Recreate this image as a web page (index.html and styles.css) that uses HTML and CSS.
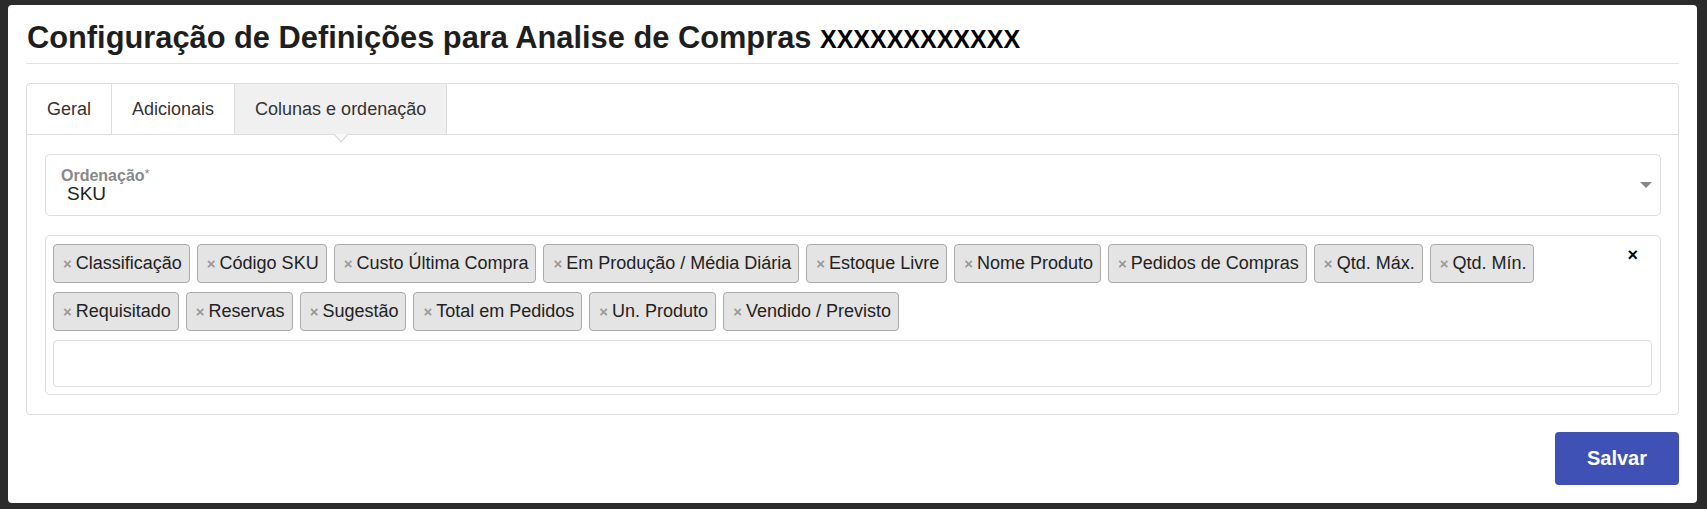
FILE: index.html
```html
<!DOCTYPE html>
<html lang="pt">
<head>
<meta charset="utf-8">
<title>Configuração de Definições</title>
<link rel="stylesheet" href="styles.css">
</head>
<body>
<div class="modal">
  <h3 class="title">Configuração de Definições para Analise de Compras <span class="title-code">XXXXXXXXXXXX</span></h3>
  <div class="panel">
    <div class="tabs">
      <div class="tab">Geral</div>
      <div class="tab">Adicionais</div>
      <div class="tab active">Colunas e ordenação</div>
    </div>
    <div class="panel-body">
      <div class="select">
        <div class="select-text">
          <div class="select-label">Ordenação<span class="req">*</span></div>
          <div class="select-value">SKU</div>
        </div>
        <span class="caret"></span>
      </div>
      <div class="multi">
        <ul class="chips">
          <li class="chip"><span class="chip-x">×</span>Classificação</li>
          <li class="chip"><span class="chip-x">×</span>Código SKU</li>
          <li class="chip"><span class="chip-x">×</span>Custo Última Compra</li>
          <li class="chip"><span class="chip-x">×</span>Em Produção / Média Diária</li>
          <li class="chip"><span class="chip-x">×</span>Estoque Livre</li>
          <li class="chip"><span class="chip-x">×</span>Nome Produto</li>
          <li class="chip"><span class="chip-x">×</span>Pedidos de Compras</li>
          <li class="chip"><span class="chip-x">×</span>Qtd. Máx.</li>
          <li class="chip"><span class="chip-x">×</span>Qtd. Mín.</li>
          <li class="chip"><span class="chip-x">×</span>Requisitado</li>
          <li class="chip"><span class="chip-x">×</span>Reservas</li>
          <li class="chip"><span class="chip-x">×</span>Sugestão</li>
          <li class="chip"><span class="chip-x">×</span>Total em Pedidos</li>
          <li class="chip"><span class="chip-x">×</span>Un. Produto</li>
          <li class="chip"><span class="chip-x">×</span>Vendido / Previsto</li>
        </ul>
        <span class="clear-all">×</span>
        <div class="search"></div>
      </div>
    </div>
  </div>
  <div class="footer">
    <button class="btn-save" type="button">Salvar</button>
  </div>
</div>
</body>
</html>
```

FILE: styles.css
```css
* { box-sizing: border-box; }

html, body { height: 100%; }

body {
  margin: 0;
  padding: 5px 10px 7px 8px;
  background: #2b2b2b;
  font-family: "Liberation Sans", Arial, sans-serif;
  color: #222;
}

.modal {
  background: #fff;
  border-radius: 4px;
  padding: 15px 18px 18px;
}

.title {
  margin: 0;
  padding-left: 1px;
  font-size: 30.8px;
  font-weight: bold;
  line-height: 36px;
  padding-bottom: 6px;
  border-bottom: 1px solid #e3e3e3;
  color: #1e1e1e;
  white-space: nowrap;
}

.title-code {
  font-size: 25px;
  color: #000;
}

.panel {
  margin-top: 19px;
  border: 1px solid #ddd;
  border-radius: 4px;
}

.tabs {
  display: flex;
  border-bottom: 1px solid #ddd;
}

.tab {
  position: relative;
  padding: 0 20px;
  line-height: 50px;
  font-size: 18px;
  color: #333;
  border-right: 1px solid #ddd;
}

.tab.active {
  background: #f0f0f0;
}

.tab.active::before,
.tab.active::after {
  content: "";
  position: absolute;
  left: 50%;
  width: 0;
  height: 0;
  border-style: solid;
  border-color: transparent;
}

.tab.active::before {
  top: 100%;
  margin-left: -7px;
  border-width: 8px 7px 0 7px;
  border-top-color: #ddd;
  margin-top: 1px;
}

.tab.active::after {
  top: 100%;
  margin-left: -6px;
  border-width: 7px 6px 0 6px;
  border-top-color: #fafafa;
  margin-top: 0;
}

.panel-body {
  padding: 19px 17px 19px 18px;
}

.select {
  display: flex;
  align-items: center;
  justify-content: space-between;
  height: 62px;
  border: 1px solid #ddd;
  border-radius: 5px;
  padding: 0 8px 0 15px;
}

.select-text {
  padding-top: 2px;
}

.select-label {
  font-size: 16px;
  font-weight: bold;
  line-height: 18px;
  color: #888;
}

.req {
  font-weight: normal;
  font-size: 13px;
  vertical-align: top;
  line-height: 14px;
}

.select-value {
  margin-top: -3px;
  padding-left: 6px;
  font-size: 19px;
  line-height: 24px;
  color: #222;
}

.caret {
  width: 0;
  height: 0;
  border-left: 6px solid transparent;
  border-right: 6px solid transparent;
  border-top: 6px solid #888;
}

.multi {
  position: relative;
  margin-top: 19px;
  border: 1px solid #ddd;
  border-radius: 5px;
  padding: 8px 8px 7px 7px;
}

.chips {
  list-style: none;
  margin: 0;
  padding: 0 45px 0 0;
  display: flex;
  flex-wrap: wrap;
  gap: 9px 7px;
}

.chip {
  display: flex;
  align-items: center;
  height: 39px;
  padding: 0 7px 0 9px;
  border: 1px solid #aaa;
  border-radius: 4px;
  background: #e4e4e4;
  font-size: 18px;
  color: #222;
  white-space: nowrap;
}

.chip-x {
  font-size: 15px;
  font-weight: bold;
  color: #999;
  margin-right: 4px;
  line-height: 1;
}

.clear-all {
  position: absolute;
  top: 9px;
  right: 22px;
  font-size: 18px;
  font-weight: bold;
  color: #000;
  line-height: 20px;
}

.search {
  margin-top: 9px;
  height: 47px;
  border: 1px solid #ddd;
  border-radius: 4px;
}

.footer {
  display: flex;
  justify-content: flex-end;
  margin-top: 17px;
}

.btn-save {
  width: 124px;
  height: 53px;
  border: 0;
  border-radius: 4px;
  background: #3f51b5;
  color: #fff;
  font-family: "Liberation Sans", Arial, sans-serif;
  font-size: 20px;
  font-weight: bold;
}
```
